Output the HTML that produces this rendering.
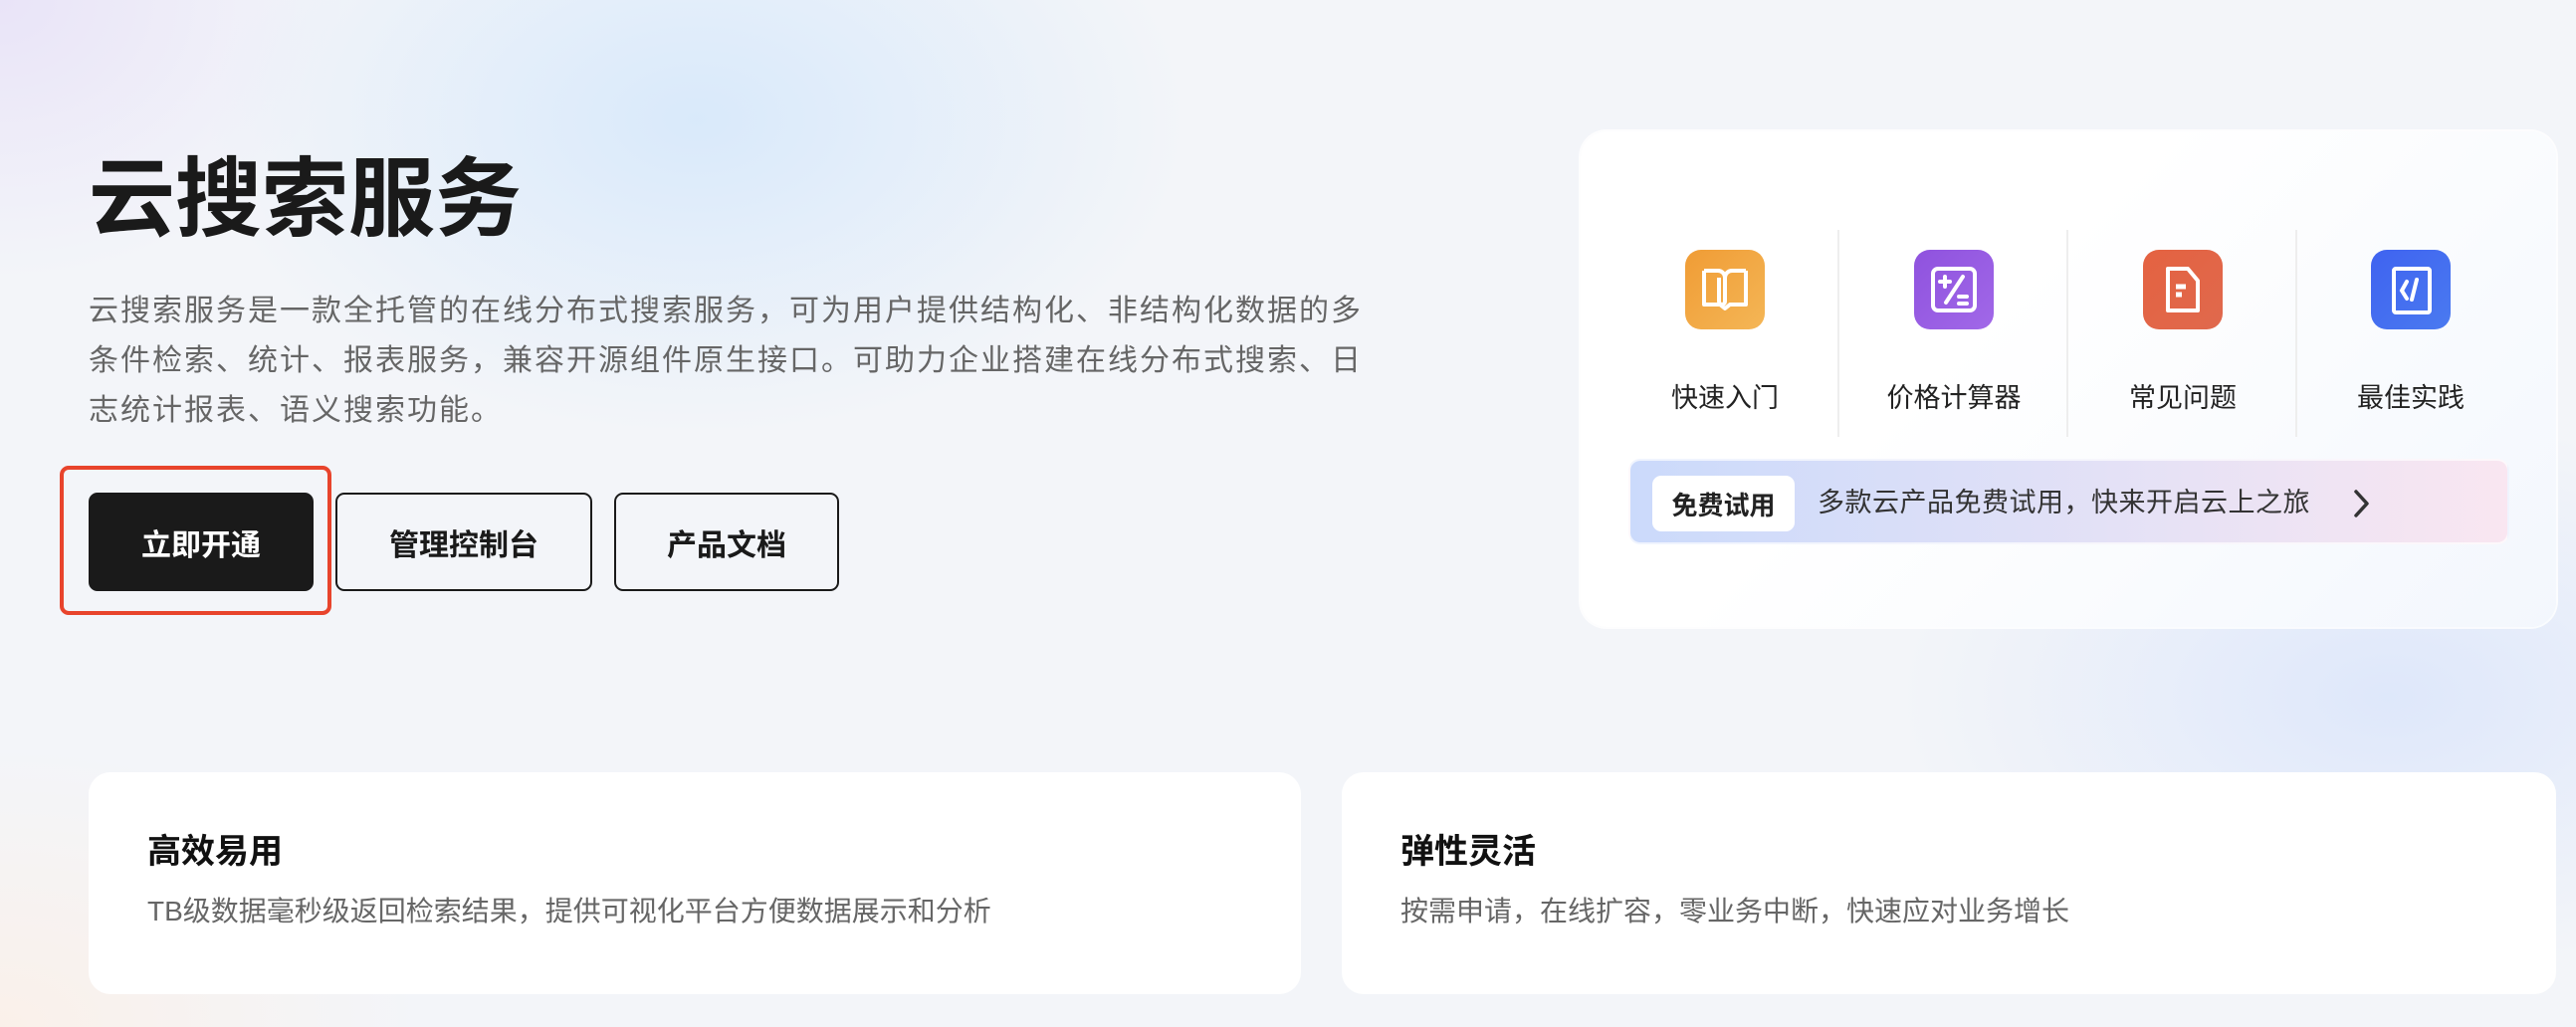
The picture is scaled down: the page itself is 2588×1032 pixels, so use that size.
<!DOCTYPE html>
<html><head><meta charset="utf-8"><style>
*{margin:0;padding:0;box-sizing:border-box}
body{width:2588px;height:1032px;overflow:hidden;position:relative;font-family:"Liberation Sans","Noto Sans CJK SC",sans-serif;
background:
radial-gradient(ellipse 700px 450px at 700px 120px,rgba(214,232,250,.9),rgba(214,232,250,0) 70%),
radial-gradient(ellipse 500px 400px at 0px 0px,rgba(232,226,248,.9),rgba(232,226,248,0) 70%),
radial-gradient(ellipse 600px 400px at 0px 1032px,rgba(251,240,232,.9),rgba(251,240,232,0) 70%),
radial-gradient(ellipse 700px 400px at 2400px 700px,rgba(220,230,250,.9),rgba(220,230,250,0) 70%),
#f3f5f9}
.abs{position:absolute}
h1{position:absolute;left:89px;top:146px;font-size:87px;font-weight:700;color:#1a1a1a;line-height:110px}
.desc{position:absolute;left:89px;top:288px;white-space:nowrap;font-size:30px;letter-spacing:2px;line-height:50px;color:#666}
.btn{position:absolute;top:495px;height:99px;border-radius:9px;font-size:30px;font-weight:700;display:flex;align-items:center;justify-content:center;border:2px solid #1a1a1a;color:#1a1a1a}
.card{position:absolute;left:1588px;top:132px;width:980px;height:498px;border-radius:26px;background:linear-gradient(135deg,#fff 40%,#f3f7fd);box-shadow:0 0 0 2px rgba(255,255,255,.8)}
.ic{position:absolute;top:251px;width:80px;height:80px;border-radius:16px;display:flex;align-items:center;justify-content:center}
.lab{position:absolute;top:378px;width:230px;text-align:center;font-size:27px;color:#222}
.div{position:absolute;top:231px;width:2px;height:208px;background:#eee}
.bc{position:absolute;top:776px;height:223px;background:#fff;border-radius:22px}
.bc h3{position:absolute;left:59px;top:52px;font-size:34px;font-weight:700;color:#111}
.bc p{position:absolute;left:59px;top:118px;font-size:28px;color:#666}
</style></head><body>
<h1>云搜索服务</h1>
<div class="desc">云搜索服务是一款全托管的在线分布式搜索服务，可为用户提供结构化、非结构化数据的多<br>条件检索、统计、报表服务，兼容开源组件原生接口。可助力企业搭建在线分布式搜索、日<br>志统计报表、语义搜索功能。</div>
<div class="abs" style="left:60px;top:468px;width:273px;height:150px;border:4px solid #e8442c;border-radius:9px"></div>
<div class="btn" style="left:89px;width:226px;background:#1a1a1a;color:#fff">立即开通</div>
<div class="btn" style="left:337px;width:258px">管理控制台</div>
<div class="btn" style="left:617px;width:226px">产品文档</div>

<div class="card"></div>
<div class="div" style="left:1846px"></div>
<div class="div" style="left:2076px"></div>
<div class="div" style="left:2306px"></div>
<div class="ic" style="left:1693px;background:linear-gradient(135deg,#f09c35,#f4b656)">
<svg width="50" height="50" viewBox="0 0 50 50" fill="none" stroke="#fff" stroke-width="4" stroke-linejoin="round"><path d="M4 6h14a7 7 0 0 1 7 7v24a3 3 0 0 1-6 0V13M46 6H32a7 7 0 0 0-7 7M4 6v34h16l5 4 5-4h16V6"/></svg></div>
<div class="ic" style="left:1923px;background:linear-gradient(135deg,#8f52de,#a168e8)">
<svg width="50" height="50" viewBox="0 0 50 50" fill="none" stroke="#fff" stroke-width="4" stroke-linecap="round"><rect x="4" y="4" width="42" height="42" rx="5"/><path d="M11 17h10M16 12v10M34 12L17 38M30 32h8M30 39h8"/></svg></div>
<div class="ic" style="left:2153px;background:linear-gradient(135deg,#e46241,#e0694d)">
<svg width="50" height="50" viewBox="0 0 50 50" fill="none" stroke="#fff" stroke-width="4" stroke-linejoin="round"><path d="M10 4h20l10 12v30H10z"/><path d="M18 22h10M18 30h6" stroke-width="5"/></svg></div>
<div class="ic" style="left:2382px;background:linear-gradient(135deg,#3f63f0,#4a7af0)">
<svg width="50" height="50" viewBox="0 0 50 50" fill="none" stroke="#fff" stroke-width="4" stroke-linecap="round"><rect x="8" y="4" width="36" height="44" rx="2"/><path d="M21 17l-5 9 5 8M31 15l-5 20"/></svg></div>
<div class="lab" style="left:1618px">快速入门</div>
<div class="lab" style="left:1848px">价格计算器</div>
<div class="lab" style="left:2078px">常见问题</div>
<div class="lab" style="left:2307px">最佳实践</div>
<div class="abs" style="left:1636px;top:461px;width:885px;height:86px;border-radius:12px;background:linear-gradient(90deg,#cbdafb,#dfe0f7 45%,#f9e6f1);border:2px solid rgba(255,255,255,.7)"></div>
<div class="abs" style="left:1660px;top:478px;width:143px;height:56px;border-radius:9px;background:#fff;font-size:26px;font-weight:700;color:#222;display:flex;align-items:center;justify-content:center">免费试用</div>
<div class="abs" style="left:1826px;top:488px;font-size:27px;letter-spacing:0.5px;color:#333;line-height:34px">多款云产品免费试用，快来开启云上之旅</div>
<svg class="abs" style="left:2362px;top:490px" width="22" height="32" viewBox="0 0 22 32" fill="none" stroke="#333" stroke-width="3.5" stroke-linecap="round" stroke-linejoin="round"><path d="M5 4l11 12L5 28"/></svg>

<div class="bc" style="left:89px;width:1218px"><h3>高效易用</h3><p>TB级数据毫秒级返回检索结果，提供可视化平台方便数据展示和分析</p></div>
<div class="bc" style="left:1348px;width:1220px"><h3>弹性灵活</h3><p>按需申请，在线扩容，零业务中断，快速应对业务增长</p></div>
</body></html>
